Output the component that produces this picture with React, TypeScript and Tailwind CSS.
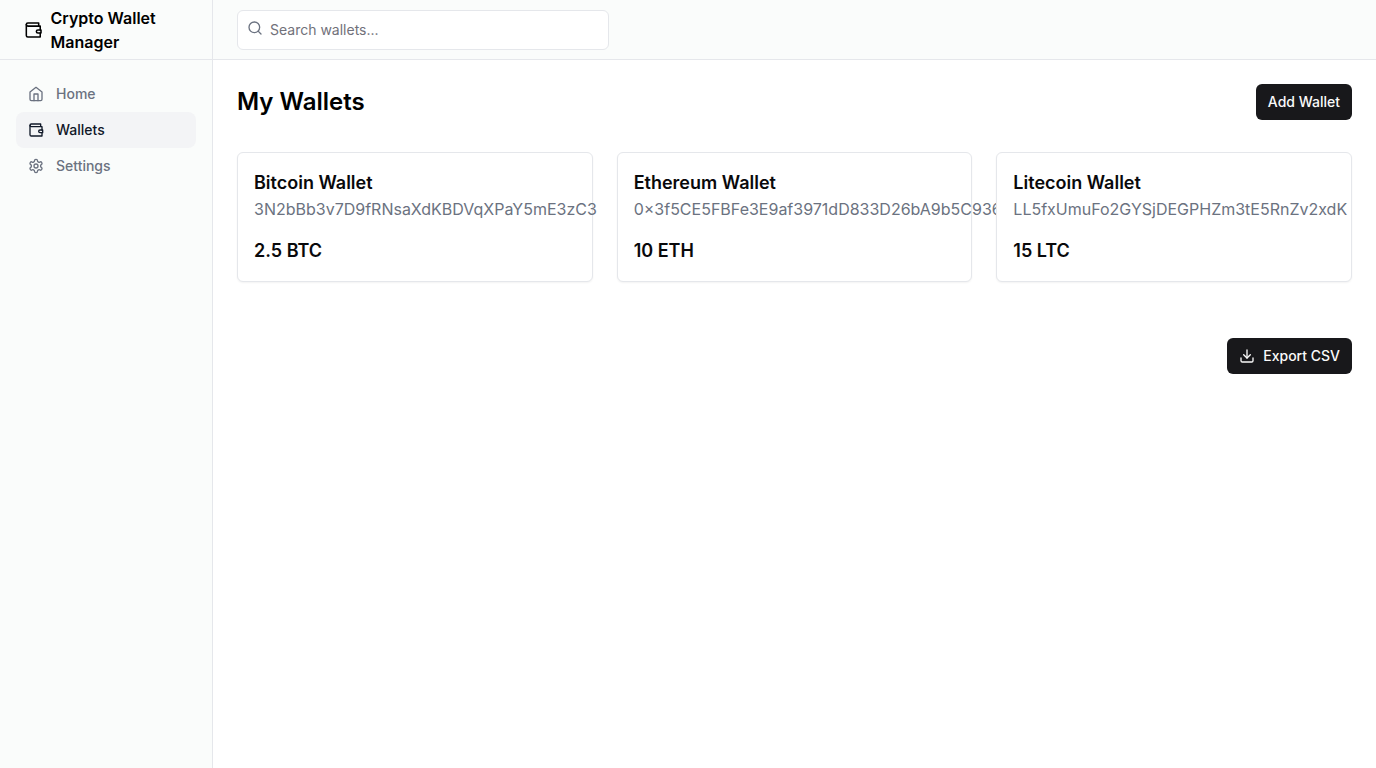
import type { ReactNode } from "react";
import { Download, Search } from "lucide-react";

type IconProps = { className?: string };

function Icon({ className, children }: IconProps & { children: ReactNode }) {
  return (
    <svg
      className={className}
      viewBox="0 0 24 24"
      fill="none"
      stroke="currentColor"
      strokeWidth="2"
      strokeLinecap="round"
      strokeLinejoin="round"
      aria-hidden="true"
    >
      {children}
    </svg>
  );
}

function WalletIcon({ className }: IconProps) {
  return (
    <Icon className={className}>
      <path d="M21 12V7H5a2 2 0 0 1 0-4h14v4" />
      <path d="M3 5v14a2 2 0 0 0 2 2h16v-5" />
      <path d="M18 12a2 2 0 0 0 0 4h4v-4Z" />
    </Icon>
  );
}

function HomeIcon({ className }: IconProps) {
  return (
    <Icon className={className}>
      <path d="m3 9 9-7 9 7v11a2 2 0 0 1-2 2H5a2 2 0 0 1-2-2z" />
      <polyline points="9 22 9 12 15 12 15 22" />
    </Icon>
  );
}

function SettingsIcon({ className }: IconProps) {
  return (
    <Icon className={className}>
      <path d="M12.22 2h-.44a2 2 0 0 0-2 2v.18a2 2 0 0 1-1 1.73l-.43.25a2 2 0 0 1-2 0l-.15-.08a2 2 0 0 0-2.73.73l-.22.38a2 2 0 0 0 .73 2.73l.15.1a2 2 0 0 1 1 1.72v.51a2 2 0 0 1-1 1.74l-.15.09a2 2 0 0 0-.73 2.73l.22.38a2 2 0 0 0 2.73.73l.15-.08a2 2 0 0 1 2 0l.43.25a2 2 0 0 1 1 1.73V20a2 2 0 0 0 2 2h.44a2 2 0 0 0 2-2v-.18a2 2 0 0 1 1-1.73l.43-.25a2 2 0 0 1 2 0l.15.08a2 2 0 0 0 2.73-.73l.22-.39a2 2 0 0 0-.73-2.73l-.15-.08a2 2 0 0 1-1-1.74v-.5a2 2 0 0 1 1-1.74l.15-.09a2 2 0 0 0 .73-2.73l-.22-.38a2 2 0 0 0-2.73-.73l-.15.08a2 2 0 0 1-2 0l-.43-.25a2 2 0 0 1-1-1.73V4a2 2 0 0 0-2-2z" />
      <circle cx="12" cy="12" r="3" />
    </Icon>
  );
}

const wallets = [
  { name: "Bitcoin Wallet", address: "3N2bBb3v7D9fRNsaXdKBDVqXPaY5mE3zC3", balance: "2.5 BTC" },
  { name: "Ethereum Wallet", address: "0×3f5CE5FBFe3E9af3971dD833D26bA9b5C936", balance: "10 ETH" },
  { name: "Litecoin Wallet", address: "LL5fxUmuFo2GYSjDEGPHZm3tE5RnZv2xdK", balance: "15 LTC" },
];

const links = [
  { label: "Home", icon: HomeIcon, active: false },
  { label: "Wallets", icon: WalletIcon, active: true },
  { label: "Settings", icon: SettingsIcon, active: false },
];

const buttonClass =
  "flex h-9 items-center rounded-md bg-zinc-900 px-3 text-sm font-medium text-zinc-50 hover:bg-zinc-800";

export default function App() {
  return (
    <div className="flex min-h-screen bg-white font-[Inter,sans-serif] text-black">
      <aside className="w-[213px] shrink-0 border-r border-gray-200 bg-[#fafcfb]">
        <div className="flex h-15 items-center border-b border-gray-200 px-6">
          <a href="#" className="flex items-center gap-2 font-semibold">
            <WalletIcon className="h-6 w-6" />
            <span>Crypto Wallet Manager</span>
          </a>
        </div>
        <nav className="px-4 py-4 text-sm font-medium">
          {links.map(({ label, icon: LinkIcon, active }) => (
            <a
              key={label}
              href="#"
              className={
                active
                  ? "flex items-center gap-3 rounded-lg bg-gray-100 px-3 py-2 text-gray-900"
                  : "flex items-center gap-3 rounded-lg px-3 py-2 text-[#6b7280]"
              }
            >
              <LinkIcon className="h-4 w-4" />
              {label}
            </a>
          ))}
        </nav>
      </aside>
      <div className="flex min-w-0 flex-1 flex-col">
        <header className="flex h-15 items-center border-b border-gray-200 bg-[#fafcfb] px-6">
          <form className="relative w-1/3">
            <Search className="absolute top-2.5 left-2.5 h-4 w-4 text-[#6b7280]" />
            <input
              type="search"
              aria-label="Search wallets"
              placeholder="Search wallets..."
              className="h-10 w-full rounded-md border border-gray-200 bg-white pr-3 pl-8 text-sm placeholder:text-[#71717a]"
            />
          </form>
        </header>
        <main className="p-6">
          <div className="flex items-center justify-between">
            <h1 className="text-2xl font-semibold">My Wallets</h1>
            <button type="button" className={buttonClass}>Add Wallet</button>
          </div>
          <div className="mt-8 grid grid-cols-3 gap-6">
            {wallets.map((wallet) => (
              <section
                key={wallet.name}
                className="relative min-w-0 rounded-md border border-gray-200 bg-white p-4 text-zinc-950 shadow-xs"
              >
                <h2 className="text-lg font-semibold">{wallet.name}</h2>
                <p className="text-[#6b7280]">{wallet.address}</p>
                <p className="mt-4 text-lg font-semibold">{wallet.balance}</p>
              </section>
            ))}
          </div>
          <div className="mt-14 flex justify-end">
            <button type="button" className={buttonClass}>
              <Download className="mr-2 h-4 w-4" />
              Export CSV
            </button>
          </div>
        </main>
      </div>
    </div>
  );
}
